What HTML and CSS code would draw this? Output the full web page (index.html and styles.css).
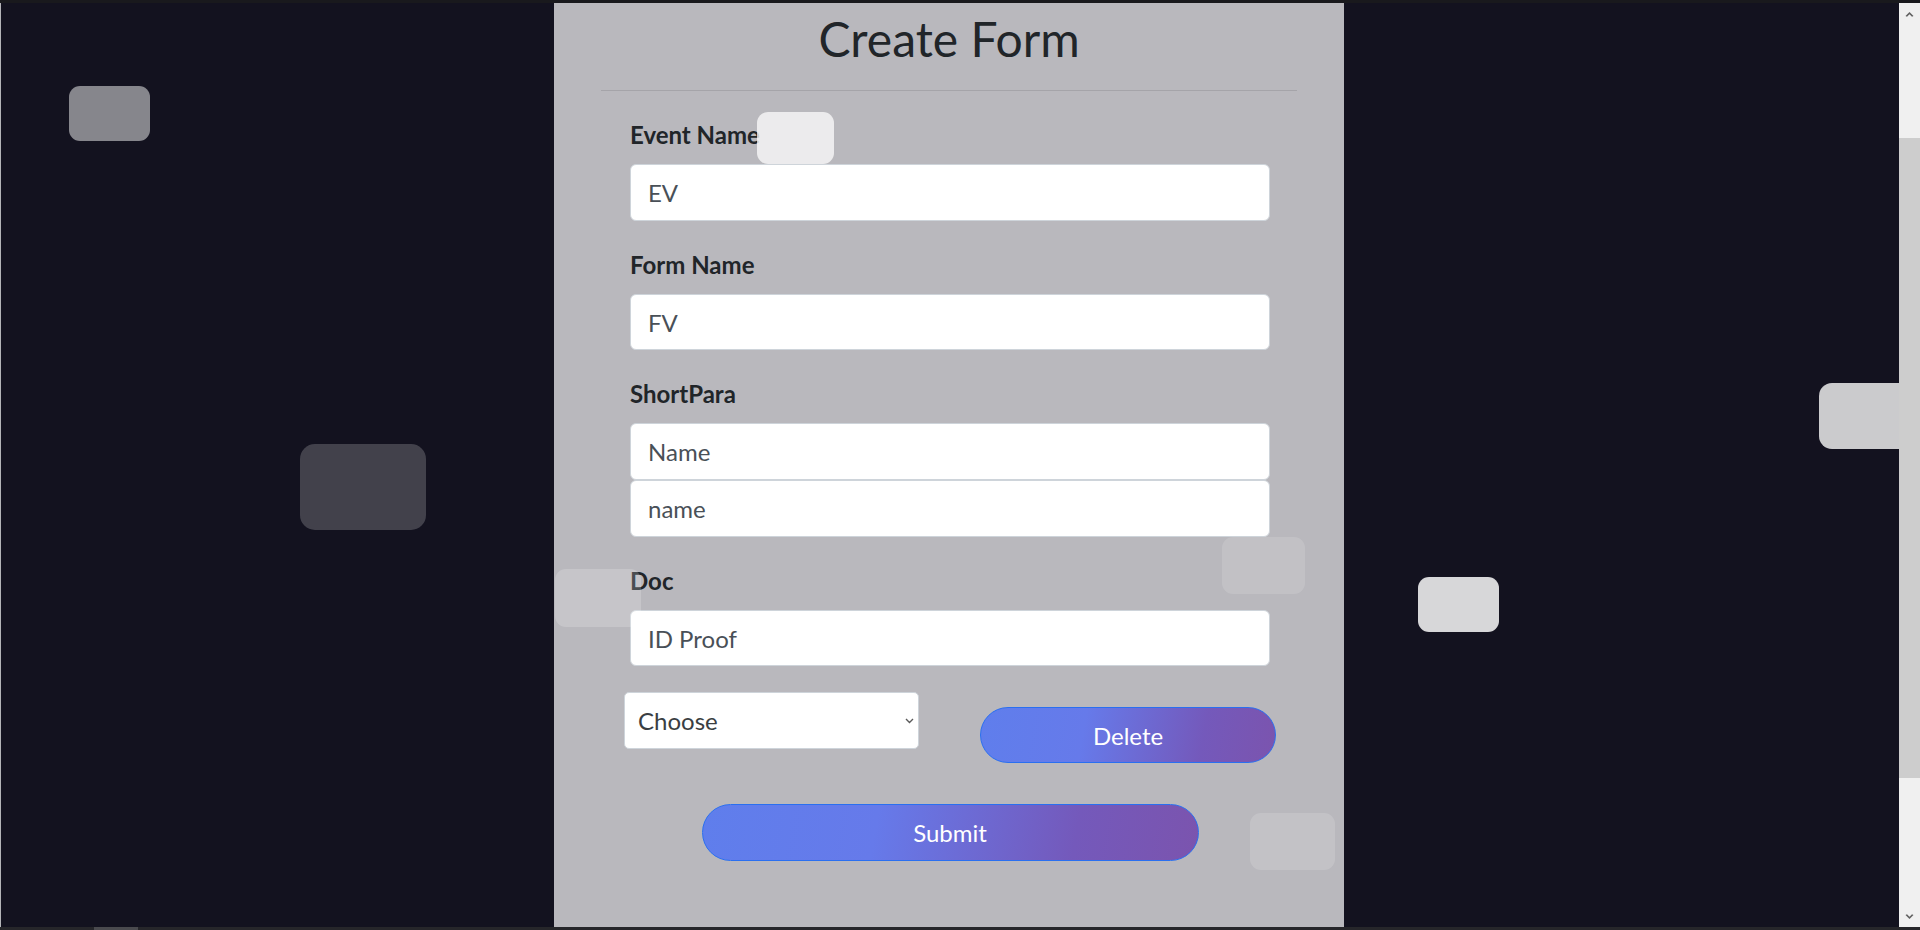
FILE: index.html
```html
<!DOCTYPE html>
<html lang="en">
<head>
<meta charset="utf-8">
<title>Create Form</title>
<link rel="stylesheet" href="styles.css">
</head>
<body>
<div class="window">
  <div class="topbar"></div>
  <div class="main">
    <div class="edge"></div>
    <div class="stage">
      <div class="card">
        <h1 class="title">Create Form</h1>
        <hr class="divider">
        <form class="form">
          <div class="group">
            <label class="label">Event Name</label>
            <input class="field" type="text" value="EV">
          </div>
          <div class="group">
            <label class="label">Form Name</label>
            <input class="field" type="text" value="FV">
          </div>
          <div class="group">
            <label class="label">ShortPara</label>
            <input class="field" type="text" value="Name">
            <input class="field" type="text" value="name">
          </div>
          <div class="group">
            <label class="label">Doc</label>
            <input class="field" type="text" value="ID Proof">
          </div>
          <div class="actions">
            <div class="select-wrap">
              <select class="select"><option>Choose</option></select>
              <svg class="chev" width="9" height="6" viewBox="0 0 9 6"><path d="M1 1 L4.5 4.5 L8 1" fill="none" stroke="#5a5a5a" stroke-width="1.4"/></svg>
            </div>
            <button type="button" class="btn btn-delete">Delete</button>
          </div>
          <div class="submit-row">
            <button type="button" class="btn btn-submit">Submit</button>
          </div>
        </form>
      </div>
      <span class="bubble b1"></span>
      <span class="bubble b2"></span>
      <span class="bubble b3"></span>
      <span class="bubble b4"></span>
      <span class="bubble b5"></span>
      <span class="bubble b6"></span>
      <span class="bubble b7"></span>
      <span class="bubble b8"></span>
    </div>
    <div class="scrollbar">
      <div class="sb-btn"><svg width="9" height="6" viewBox="0 0 9 6"><path d="M0.5 5 L4.5 1 L8.5 5 L7 5.8 L4.5 3.2 L2 5.8 Z" fill="#606060"/></svg></div>
      <div class="sb-gap"></div>
      <div class="sb-thumb"></div>
      <div class="sb-fill"></div>
      <div class="sb-btn"><svg width="9" height="6" viewBox="0 0 9 6"><path d="M0.5 1 L4.5 5 L8.5 1 L7 0.2 L4.5 2.8 L2 0.2 Z" fill="#606060"/></svg></div>
    </div>
  </div>
  <div class="bottombar"><span class="bottom-thumb"></span></div>
</div>
</body>
</html>
```

FILE: styles.css
```css
* { box-sizing: border-box; }

html, body {
  margin: 0;
  padding: 0;
  height: 100%;
  overflow: hidden;
  background: #13121f;
  font-family: "Lato", "Open Sans", sans-serif;
}

.window {
  display: flex;
  flex-direction: column;
  height: 930px;
  width: 1920px;
}

.topbar {
  height: 3px;
  background: #19191d;
  flex: none;
}

.bottombar {
  height: 3px;
  background: #26262a;
  flex: none;
  display: flex;
}

.bottom-thumb {
  margin-left: 94px;
  width: 44px;
  background: #4a4a4e;
}

.main {
  flex: 1;
  display: flex;
  min-height: 0;
}

.edge {
  width: 1px;
  background: #b4b4b8;
  flex: none;
}

.stage {
  flex: 1;
  position: relative;
  overflow: hidden;
  display: flex;
  justify-content: center;
  padding-right: 2px;
  background: #13121f;
}

.card {
  width: 790px;
  height: 100%;
  background: #b9b8bd;
  flex: none;
}

.title {
  margin: 7px 0 0;
  font-size: 48px;
  line-height: 58px;
  font-weight: 400;
  color: #212529;
  text-align: center;
}

.divider {
  margin: 22px 47px 0;
  border: 0;
  height: 1px;
  background: #a5a4a9;
}

.form {
  padding: 26px 74px 0 76px;
}

.group + .group {
  margin-top: 26px;
}

.label {
  display: block;
  font-size: 24px;
  line-height: 36px;
  font-weight: 700;
  color: #212529;
  margin-bottom: 11px;
}

.field {
  display: block;
  width: 100%;
  height: 56.7px;
  padding: 0 17px;
  border: 1px solid #ced4da;
  border-radius: 6px;
  background: #fff;
  font-family: inherit;
  font-size: 24px;
  color: #495057;
  outline: none;
}

.actions {
  display: flex;
  justify-content: space-between;
  align-items: flex-start;
  margin: 25.5px -6px 0;
}

.select-wrap {
  position: relative;
  width: 295px;
  height: 57px;
}

.select {
  appearance: none;
  -webkit-appearance: none;
  width: 100%;
  height: 100%;
  padding: 0 30px 0 13px;
  border: 1px solid #ced4da;
  border-radius: 5px;
  background: #fff;
  font-family: inherit;
  font-size: 24px;
  color: #3a3e42;
  outline: none;
}

.chev {
  position: absolute;
  right: 5px;
  top: 26px;
}

.btn {
  height: 56px;
  padding-top: 2px;
  border: 1px solid #2a6ff0;
  border-radius: 30px;
  background: linear-gradient(100deg, #5f7eec 0%, #667aea 35%, #7459bb 75%, #7b54ae 100%);
  color: #fff;
  font-family: inherit;
  font-size: 24px;
  cursor: pointer;
}

.btn-delete {
  width: 296px;
  margin-top: 15px;
}

.submit-row {
  display: flex;
  justify-content: center;
  margin-top: 41px;
}

.btn-submit {
  width: 497px;
  height: 57px;
}

.bubble {
  position: absolute;
  border-radius: 11px;
  display: block;
}

.b1 { left: 68px; top: 83px; width: 81px; height: 55px; background: rgba(255,255,255,0.49); }
.b2 { left: 756px; top: 109px; width: 77px; height: 52px; background: rgba(250,250,250,0.78); }
.b3 { left: 299px; top: 441px; width: 126px; height: 86px; border-radius: 15px; background: rgba(255,255,255,0.2); }
.b4 { left: 554px; top: 566px; width: 86px; height: 58px; background: rgba(255,255,255,0.19); }
.b5 { left: 1221px; top: 534px; width: 83px; height: 57px; background: rgba(255,255,255,0.13); }
.b6 { left: 1417px; top: 574px; width: 81px; height: 55px; background: rgba(255,255,255,0.83); }
.b7 { left: 1818px; top: 380px; width: 100px; height: 66px; border-radius: 13px; background: rgba(255,255,255,0.78); }
.b8 { left: 1249px; top: 810px; width: 85px; height: 57px; background: rgba(255,255,255,0.15); }

.scrollbar {
  width: 21px;
  flex: none;
  display: flex;
  flex-direction: column;
  background: #f0f0f0;
}

.sb-btn {
  height: 21px;
  display: flex;
  align-items: center;
  justify-content: center;
  flex: none;
}

.sb-gap {
  height: 114px;
  flex: none;
}

.sb-thumb {
  height: 640px;
  background: #cdcdcd;
  flex: none;
}

.sb-fill {
  flex: 1;
}
```
